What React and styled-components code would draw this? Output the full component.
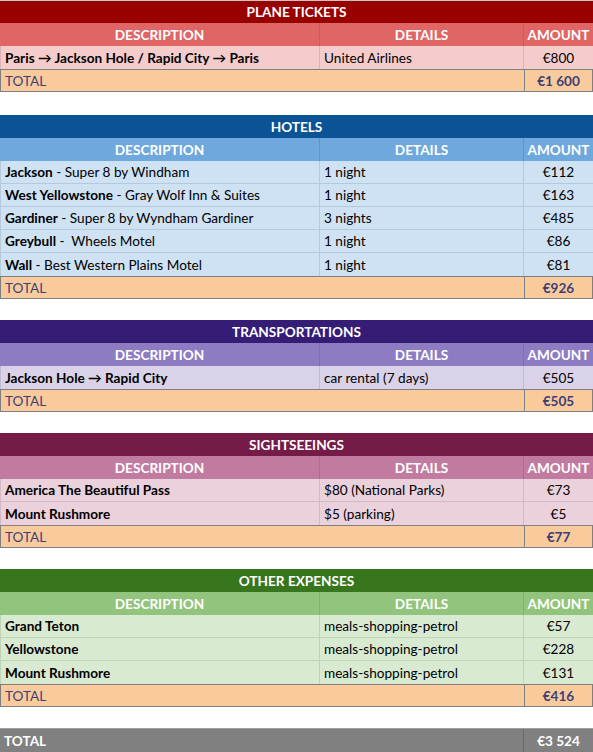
import React from "react";
import styled, { createGlobalStyle } from "styled-components";

const Global = createGlobalStyle`
  html, body { margin: 0; padding: 0; background: #ffffff; }
  body { font-family: Lato, "Liberation Sans", "DejaVu Sans", sans-serif; }
  * { box-sizing: border-box; }
`;

const themes = {
  red: { title: "#990000", head: "#e06666", row: "#f4cccc", line: "#dcb3b3", headLine: "#cf5a5a" },
  blue: { title: "#0b5394", head: "#6fa8dc", row: "#cfe2f3", line: "#b5c9db", headLine: "#5f97c9" },
  purple: { title: "#351c75", head: "#8e7cc3", row: "#d9d2e9", line: "#c0b9d1", headLine: "#7f6db3" },
  plum: { title: "#741b47", head: "#c27ba0", row: "#ead1dc", line: "#d3b9c4", headLine: "#b06d90" },
  green: { title: "#38761d", head: "#93c47d", row: "#d9ead3", line: "#bfd3b9", headLine: "#84b36f" },
};

const Sheet = styled.div`
  width: 593px;
  font-size: 13.6px;
  color: #000;
`;

const Section = styled.section`
  margin-top: ${(p) => p.$gap || 0}px;
`;

const TitleRow = styled.div`
  height: 23px;
  display: flex;
  align-items: center;
  justify-content: center;
  background: ${(p) => p.$c.title};
  border-top: ${(p) => (p.$top ? "1px solid #c6c6c6" : "none")};
  color: #fff;
  font-weight: 700;
  text-transform: uppercase;
`;

const Grid = styled.div`
  display: grid;
  grid-template-columns: 320px 204px 1fr;
  height: 23px;
`;

const HeadRow = styled(Grid)`
  background: ${(p) => p.$c.head};
`;

const HeadCell = styled.div`
  display: flex;
  align-items: center;
  justify-content: center;
  color: #fff;
  font-weight: 700;
  border-right: ${(p) => (p.$last ? "none" : `1px solid ${p.$c.headLine}`)};
`;

const DataRow = styled(Grid)`
  background: ${(p) => p.$c.row};
  border-bottom: ${(p) => (p.$lastRow ? "none" : `1px solid ${p.$c.line}`)};
`;

const Cell = styled.div`
  display: flex;
  align-items: center;
  padding-left: ${(p) => (p.$center ? 0 : 4)}px;
  justify-content: ${(p) => (p.$center ? "center" : "flex-start")};
  white-space: pre;
  border-right: ${(p) => (p.$last ? "none" : `1px solid ${p.$c.line}`)};
  border-left: ${(p) => (p.$first ? `1px solid ${p.$c.line}` : "none")};
`;

const Strong = styled.b`
  font-weight: 700;
`;

const TotalRow = styled.div`
  display: grid;
  grid-template-columns: 523px 1fr;
  height: 23px;
  background: #f9cb9c;
  border: 1px solid #7f7f7f;
  color: #3f3f76;
`;

const TotalLabel = styled.div`
  display: flex;
  align-items: center;
  padding-left: 4px;
`;

const TotalAmount = styled.div`
  display: flex;
  align-items: center;
  justify-content: center;
  font-weight: 700;
  border-left: 1px solid #7f7f7f;
`;

const GrandRow = styled.div`
  display: grid;
  grid-template-columns: 523px 1fr;
  height: 24px;
  background: #808080;
  color: #fff;
  font-weight: 700;
  border-top: 1px solid #a0a0a0;
`;

const GrandLabel = styled.div`
  display: flex;
  align-items: center;
  padding-left: 4px;
`;

const GrandAmount = styled.div`
  display: flex;
  align-items: center;
  justify-content: center;
  border-left: 1px solid #6a6a6a;
`;

const sections = [
  {
    title: "Plane tickets",
    c: themes.red,
    gap: 0,
    rows: [[["Paris → Jackson Hole / Rapid City → Paris", ""], "United Airlines", "€800"]],
    total: "€1 600",
  },
  {
    title: "Hotels",
    c: themes.blue,
    gap: 23,
    rows: [
      [["Jackson", " - Super 8 by Windham"], "1 night", "€112"],
      [["West Yellowstone", " - Gray Wolf Inn & Suites"], "1 night", "€163"],
      [["Gardiner", " - Super 8 by Wyndham Gardiner"], "3 nights", "€485"],
      [["Greybull", " -  Wheels Motel"], "1 night", "€86"],
      [["Wall", " - Best Western Plains Motel"], "1 night", "€81"],
    ],
    total: "€926",
  },
  {
    title: "Transportations",
    c: themes.purple,
    gap: 21,
    rows: [[["Jackson Hole → Rapid City", ""], "car rental (7 days)", "€505"]],
    total: "€505",
  },
  {
    title: "Sightseeings",
    c: themes.plum,
    gap: 21,
    rows: [
      [["America The Beautiful Pass", ""], "$80 (National Parks)", "€73"],
      [["Mount Rushmore", ""], "$5 (parking)", "€5"],
    ],
    total: "€77",
  },
  {
    title: "Other expenses",
    c: themes.green,
    gap: 21,
    rows: [
      [["Grand Teton", ""], "meals-shopping-petrol", "€57"],
      [["Yellowstone", ""], "meals-shopping-petrol", "€228"],
      [["Mount Rushmore", ""], "meals-shopping-petrol", "€131"],
    ],
    total: "€416",
  },
];

function Block({ s, first }) {
  return (
    <Section $gap={s.gap}>
      <TitleRow $c={s.c} $top={first}>{s.title}</TitleRow>
      <HeadRow $c={s.c}>
        <HeadCell $c={s.c}>DESCRIPTION</HeadCell>
        <HeadCell $c={s.c}>DETAILS</HeadCell>
        <HeadCell $c={s.c} $last>AMOUNT</HeadCell>
      </HeadRow>
      {s.rows.map((r, i) => (
        <DataRow key={i} $c={s.c} $lastRow={i === s.rows.length - 1}>
          <Cell $c={s.c} $first>
            <Strong>{r[0][0]}</Strong>
            {r[0][1]}
          </Cell>
          <Cell $c={s.c}>{r[1]}</Cell>
          <Cell $c={s.c} $center $last>{r[2]}</Cell>
        </DataRow>
      ))}
      <TotalRow>
        <TotalLabel>TOTAL</TotalLabel>
        <TotalAmount>{s.total}</TotalAmount>
      </TotalRow>
    </Section>
  );
}

export default function App() {
  return (
    <>
      <Global />
      <Sheet>
        {sections.map((s, i) => (
          <Block key={s.title} s={s} first={i === 0} />
        ))}
        <Section $gap={21}>
          <GrandRow>
            <GrandLabel>TOTAL</GrandLabel>
            <GrandAmount>€3 524</GrandAmount>
          </GrandRow>
        </Section>
      </Sheet>
    </>
  );
}
